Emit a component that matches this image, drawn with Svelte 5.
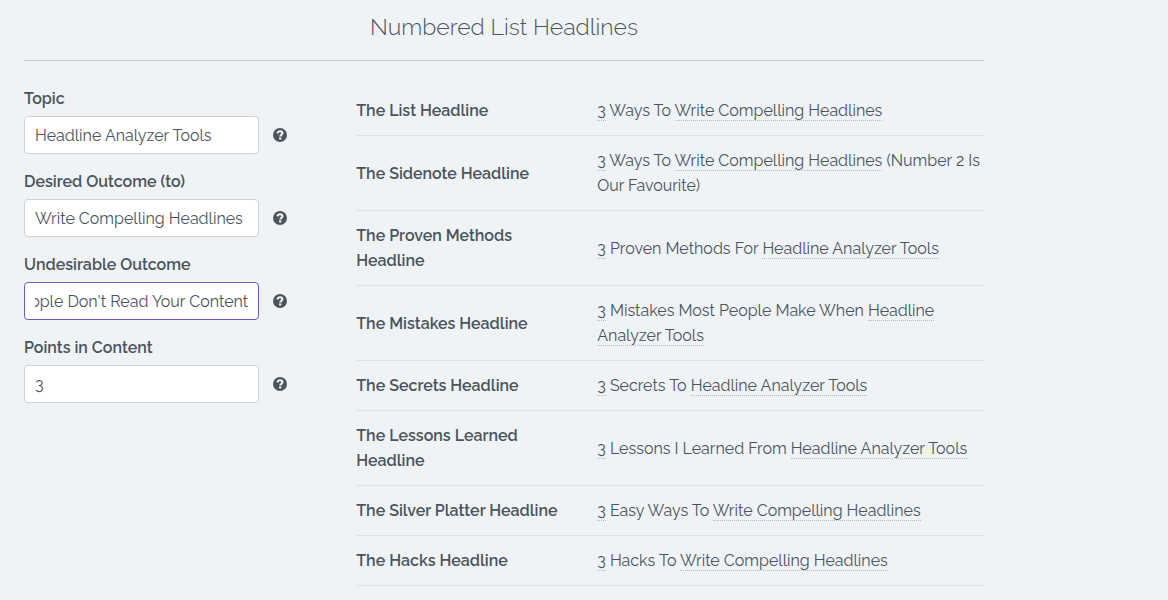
<script>
  import { onMount } from 'svelte';

  let values = $state({
    topic: 'Headline Analyzer Tools',
    outcome: 'Write Compelling Headlines',
    undesirable: "People Don't Read Your Content",
    points: '3'
  });

  const fields = [
    { id: 'topic', label: 'Topic' },
    { id: 'outcome', label: 'Desired Outcome (to)' },
    { id: 'undesirable', label: 'Undesirable Outcome', active: true },
    { id: 'points', label: 'Points in Content' }
  ];

  // String parts are fixed copy, { key } parts are filled in from the form.
  const points = { key: 'points' };
  const outcome = { key: 'outcome' };
  const topic = { key: 'topic' };

  const headlines = [
    { name: 'The List Headline', parts: [points, ' Ways To ', outcome] },
    { name: 'The Sidenote Headline', parts: [points, ' Ways To ', outcome, ' (Number 2 Is Our Favourite)'] },
    { name: 'The Proven Methods Headline', parts: [points, ' Proven Methods For ', topic] },
    { name: 'The Mistakes Headline', parts: [points, ' Mistakes Most People Make When ', topic] },
    { name: 'The Secrets Headline', parts: [points, ' Secrets To ', topic] },
    { name: 'The Lessons Learned Headline', parts: [points, ' Lessons I Learned From ', topic] },
    { name: 'The Silver Platter Headline', parts: [points, ' Easy Ways To ', outcome] },
    { name: 'The Hacks Headline', parts: [points, ' Hacks To ', outcome] }
  ];

  let form;

  onMount(() => {
    for (const input of form.querySelectorAll('input')) {
      input.scrollLeft = input.scrollWidth;
    }
  });
</script>

<main class="container">
  <h1>Numbered List Headlines</h1>
  <hr />
  <div class="row">
    <form bind:this={form}>
      {#each fields as field (field.id)}
        <div class="field">
          <label for={field.id}>{field.label}</label>
          <div class="control">
            <input id={field.id} type="text" class:active={field.active} bind:value={values[field.id]} />
            <button type="button" class="help" aria-label="Help: {field.label}">
              <svg viewBox="0 0 14 14" width="14" height="14" aria-hidden="true">
                <circle cx="7" cy="7" r="7" fill="currentColor" />
                <path d="M4.3 5.4C4.7 4 5.6 3.2 7 3.2c1.4 0 2.4.8 2.4 2 0 1.7-2.1 1.5-2.1 3.2" fill="none" stroke="#eff3f6" stroke-width="2.1" />
                <rect x="6.1" y="9.4" width="2.2" height="2.1" fill="#eff3f6" />
              </svg>
            </button>
          </div>
        </div>
      {/each}
    </form>

    <table>
      <tbody>
        {#each headlines as headline (headline.name)}
          <tr>
            <th scope="row">{headline.name}</th>
            <td>{#each headline.parts as part}{#if part.key}<span class="slot">{values[part.key]}</span>{:else}{part}{/if}{/each}</td>
          </tr>
        {/each}
      </tbody>
    </table>
  </div>
</main>

<style>
  :global(body) {
    background: #eff3f6;
  }

  .container {
    box-sizing: border-box;
    max-width: 1008px;
    padding: 9px 24px 0;
    color: #4b545c;
    font-family: Raleway, Lato, sans-serif;
    font-size: 16px;
    font-weight: 400;
    line-height: 25px;
  }

  h1 {
    margin: 0;
    font-size: 23px;
    font-weight: 300;
    line-height: 36px;
    text-align: center;
  }

  hr {
    margin: 15px 0 25px;
    border: 0;
    border-top: 1px solid #c5cacf;
  }

  .row {
    display: grid;
    grid-template-columns: minmax(0, 294fr) minmax(0, 628fr);
    column-gap: 4%;
    align-items: start;
  }

  .field {
    margin-bottom: 15px;
  }

  label {
    display: block;
    margin-bottom: 5px;
    font-weight: 600;
  }

  .control {
    display: flex;
    align-items: center;
    gap: 14px;
  }

  input {
    box-sizing: border-box;
    width: 80%;
    height: 38px;
    padding: 6px 10px;
    border: 1px solid #d1d1d1;
    border-radius: 4px;
    background: #fff;
    color: inherit;
    font: inherit;
  }

  input.active,
  input:focus {
    border-color: #6a5cc4;
    outline: 0;
  }

  .help {
    display: flex;
    padding: 0;
    border: 0;
    background: none;
    color: #4b545c;
    cursor: pointer;
  }

  table {
    width: 100%;
    border-collapse: separate;
    border-spacing: 0;
  }

  th,
  td {
    border-bottom: 1px solid #e1e1e1;
    text-align: left;
    vertical-align: middle;
  }

  th {
    width: 36%;
    padding: 12px 15px 12px 0;
    font-weight: 600;
  }

  td {
    padding: 12px 0 12px 15px;
  }

  .slot {
    border-bottom: 1px dotted #bbb;
  }
</style>
